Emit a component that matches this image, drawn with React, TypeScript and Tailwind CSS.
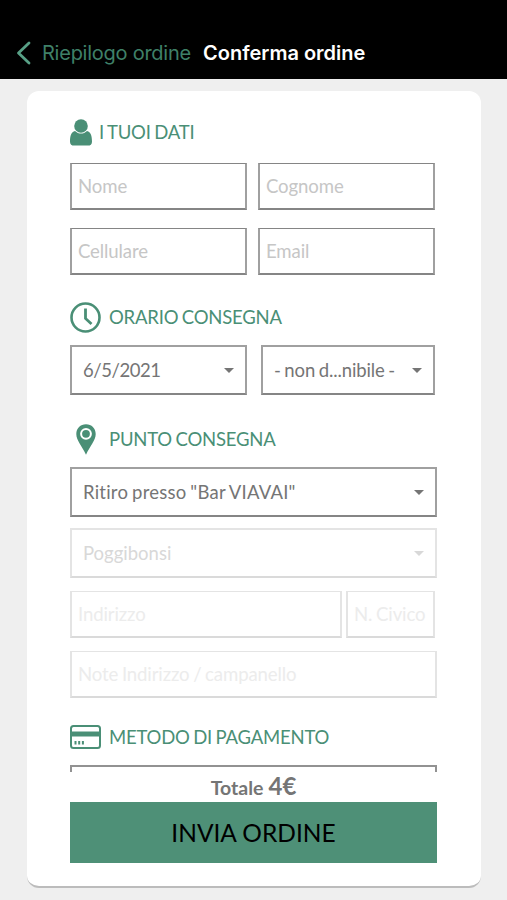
import { ReactNode } from 'react';

type FieldProps = {
  label: string;
  className?: string;
  disabled?: boolean;
};

function TextField({ label, className = '', disabled }: FieldProps) {
  return (
    <div
      className={`flex items-center shrink-0 border-2 border-t-[1px] h-[47px] pl-1.5 pt-[2px] text-[18.6px] tracking-[-0.12px] whitespace-nowrap ${
        disabled ? 'border-[#e4e4e4] border-b-[#dadada] text-[#ececec]' : 'border-[#a0a0a0] border-t-[#858585] border-b-[#858585] text-[#c6c6c6]'
      } ${className}`}
    >
      <span>{label}</span>
    </div>
  );
}

function SelectField({ label, className = '', disabled }: FieldProps) {
  return (
    <div
      className={`flex items-center justify-between shrink-0 border-2 h-[50px] pl-[11px] pr-[11px] text-[18.5px] whitespace-nowrap ${
        disabled ? 'border-[#e4e4e4] border-b-[#dadada] text-[#d8d8d8]' : 'border-[#a0a0a0] border-b-[#858585] text-[#757575]'
      } ${className}`}
    >
      <span className="pt-[2px]">{label}</span>
      <svg className="shrink-0" width="10" height="5" viewBox="0 0 10 5" fill="currentColor">
        <path d="M0 0h10L5 5z" />
      </svg>
    </div>
  );
}

function SectionTitle({ icon, children, className = '' }: { icon: ReactNode; children: ReactNode; className?: string }) {
  return (
    <h2 className={`flex items-center shrink-0 h-8 text-[18.5px] tracking-[-0.2px] text-[#4a8f76] whitespace-nowrap ${className}`}>
      {icon}
      <span className="pt-[2px]">{children}</span>
    </h2>
  );
}

function UserIcon() {
  return (
    <svg className="mr-[7px]" width="22" height="27" viewBox="0 0 22 27" fill="currentColor">
      <circle cx="11" cy="7" r="6.8" />
      <path d="M5 12C1.2 12.8 0 17 0 22.7C0 25.4 1.7 26.6 4 26.6H18C20.3 26.6 22 25.4 22 22.7C22 17 20.8 12.8 17 12C13.6 15.4 8.4 15.4 5 12Z" />
    </svg>
  );
}

function ClockIcon() {
  return (
    <svg className="mr-2" width="31" height="31" viewBox="0 0 31 31" fill="none" stroke="currentColor">
      <circle cx="15.5" cy="15.5" r="14" strokeWidth="2.6" />
      <path d="M15.5 6.5v10l6 5.5" strokeWidth="2.8" />
    </svg>
  );
}

function PinIcon() {
  return (
    <svg className="ml-1.5 mr-[13px]" width="20" height="31" viewBox="0 0 20 31" fill="none">
      <path d="M10 .3C4.4.3.3 4.5.3 10C.3 16.5 6 22 10 30.7C14 22 19.7 16.5 19.7 10C19.7 4.5 15.6.3 10 .3Z" fill="currentColor" />
      <circle cx="10" cy="9.8" r="4.9" stroke="white" strokeWidth="2" />
    </svg>
  );
}

function CardIcon() {
  return (
    <svg className="mr-2" width="31" height="24" viewBox="0 0 31 24" fill="none">
      <rect x="1" y="1" width="29" height="22" rx="2.5" stroke="currentColor" strokeWidth="2" />
      <path d="M1 6.5h29v5H1z" fill="currentColor" />
      <path d="M4.5 16h2v3.5h-2zM8.2 16h2v3.5h-2zM11.9 16h2v3.5h-2z" fill="currentColor" />
    </svg>
  );
}

export default function App() {
  return (
    <div className="flex flex-col w-[507px] h-[900px] bg-[#efefef] overflow-hidden font-['Lato',sans-serif] [font-variant-ligatures:none]">
      <header className="flex items-center shrink-0 h-[79px] pt-[26px] pl-4 bg-black font-['Inter',sans-serif] text-[20px] whitespace-nowrap">
        <svg className="mr-[11px] text-[#58a086]" width="15" height="24" viewBox="0 0 15 24" fill="none" stroke="currentColor" strokeWidth="2.8" strokeLinecap="round" strokeLinejoin="round">
          <path d="M13 2L2.5 12L13 22" />
        </svg>
        <span className="w-[161px] text-[#3f8068] tracking-[-0.25px]">Riepilogo ordine</span>
        <h1 className="font-semibold text-white">Conferma ordine</h1>
      </header>

      <main className="flex flex-col w-[454px] h-[797px] mt-3 ml-[27px] pl-[43px] pr-11 pb-6 bg-white rounded-xl border-b-2 border-[#bcbcbc] [word-spacing:-1px]">
        <div className="flex flex-col h-[681px] shrink-0 overflow-hidden">
          <SectionTitle className="mt-[25px]" icon={<UserIcon />}>I TUOI DATI</SectionTitle>
          <div className="grid shrink-0 grid-cols-[177px_177px] gap-x-[11px] gap-y-[18px] mt-[15px]">
            <TextField label="Nome" />
            <TextField label="Cognome" />
            <TextField label="Cellulare" />
            <TextField label="Email" />
          </div>

          <SectionTitle className="mt-[26px]" icon={<ClockIcon />}>ORARIO CONSEGNA</SectionTitle>
          <div className="flex shrink-0 gap-3.5 mt-3">
            <SelectField className="w-[177px] tracking-[-0.45px]" label="6/5/2021" />
            <SelectField className="w-[174px] tracking-[-0.12px]" label="- non d...nibile -" />
          </div>

          <SectionTitle className="mt-7" icon={<PinIcon />}>PUNTO CONSEGNA</SectionTitle>
          <SelectField className="mt-3 tracking-[0.22px]" label={'Ritiro presso "Bar VIAVAI"'} />
          <SelectField className="mt-[11px]" label="Poggibonsi" disabled />
          <div className="flex shrink-0 gap-1 mt-[13px]">
            <TextField className="w-[272px]" label="Indirizzo" disabled />
            <TextField className="w-[89px]" label="N. Civico" disabled />
          </div>
          <TextField className="mt-[13px]" label="Note Indirizzo / campanello" disabled />

          <SectionTitle className="mt-[23px]" icon={<CardIcon />}>METODO DI PAGAMENTO</SectionTitle>
          <div className="shrink-0 h-[50px] mt-3 border-2 border-[#929292]" />
        </div>

        <div className="flex items-baseline justify-center gap-[5px] shrink-0 h-[30px] text-[#757575] font-bold leading-[28px]">
          <span className="text-[19.5px]">Totale</span>
          <span className="text-[24px]">4€</span>
        </div>
        <button className="shrink-0 h-[61px] pt-[2px] bg-[#4e9077] text-[24.5px] text-black">INVIA ORDINE</button>
      </main>
    </div>
  );
}
